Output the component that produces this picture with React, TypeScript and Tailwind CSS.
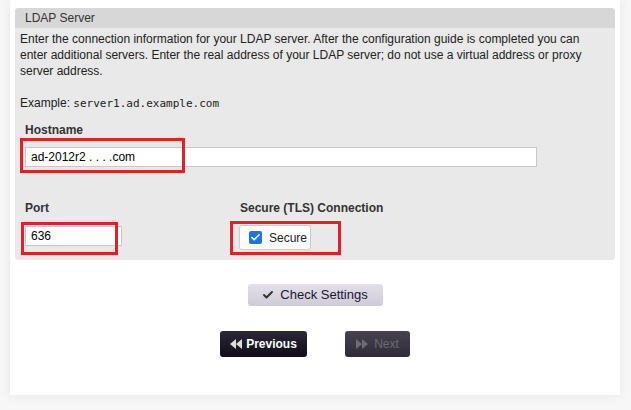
import { Check } from "lucide-react"

const App = () => {
	return (
		<div className="w-[631px] h-[410px] bg-[#f7f7f7] overflow-hidden font-['Liberation_Sans',Arial,sans-serif] text-[12px] text-[#222]">
			<div className="ml-[10px] w-[610px] h-[395px] bg-white shadow-[0_0_10px_rgba(0,0,0,0.08)] pt-[8px] px-[5px] relative">
				{/* Settings panel */}
				<div className="bg-[#e9e9e9] rounded-[4px] h-[252px] relative">
					<div className="bg-[#d7d7d7] h-[20px] rounded-t-[4px] px-[10px] leading-[20px] text-[12px] text-[#333]">
						LDAP Server
					</div>
					<div className="px-[5px] pt-[3px] leading-[16px] text-[#222]">
						<p>
							Enter the connection information for your LDAP server. After the configuration guide is completed you can enter additional servers. Enter the real address of your LDAP server; do not use a virtual address or proxy server address.
						</p>
						<p className="mt-[16px]">
							Example: <span className="font-['DejaVu_Sans_Mono',monospace] text-[11px]">server1.ad.example.com</span>
						</p>

						<div className="pl-[5px] mt-[10px]">
							<div className="font-bold text-[#333] leading-[16px]">Hostname</div>
							<input
								readOnly
								value="ad-2012r2 . . . .com"
								className="mt-[9px] w-[512px] h-[20px] bg-white border border-[#c8c8c8] px-[5px] text-[12px] text-black outline-none"
							/>
						</div>

						<div className="pl-[5px] mt-[33px] flex">
							<div className="w-[215px]">
								<div className="font-bold text-[#333] leading-[16px]">Port</div>
								<input
									readOnly
									value="636"
									className="mt-[10px] w-[97px] h-[20px] bg-white border border-[#c8c8c8] px-[5px] text-[12px] text-black outline-none"
								/>
							</div>
							<div>
								<div className="font-bold text-[#333] leading-[16px]">Secure (TLS) Connection</div>
								<div className="mt-[9px] -ml-[1px] w-[72px] h-[25px] bg-white border border-[#ccc] rounded-[3px] flex items-center pl-[9px] gap-[7px] text-[12px]">
									<span className="w-[13px] h-[13px] bg-[#1a73e8] rounded-[2px] flex items-center justify-center">
										<Check size={11} strokeWidth={3.5} color="white" />
									</span>
									<span>Secure</span>
								</div>
							</div>
						</div>
					</div>
				</div>

				{/* Buttons */}
				<div className="flex justify-center mt-[24px]">
					<div className="w-[135px] h-[22px] rounded-[3px] bg-gradient-to-b from-[#e2dfea] to-[#cfcbd8] flex items-center justify-center gap-[6px] text-[13px] text-[#1a1530]">
						<Check size={12} strokeWidth={4} color="#333" />
						<span>Check Settings</span>
					</div>
				</div>
				<div className="flex mt-[25px] pl-[205px] gap-[38px]">
					<div className="w-[87px] h-[26px] rounded-[3px] bg-gradient-to-b from-[#2c2838] to-[#100d18] flex items-center justify-center gap-[4px] text-white font-bold text-[12px]">
						<svg width="12" height="10" viewBox="0 0 12 10"><path d="M6 0 L0 5 L6 10 Z M12 0 L6 5 L12 10 Z" fill="#ddd" /></svg>
						<span>Previous</span>
					</div>
					<div className="w-[65px] h-[26px] rounded-[3px] bg-gradient-to-b from-[#46424f] to-[#2f2c38] flex items-center justify-center gap-[6px] text-[#6e6b75] text-[12px]">
						<svg width="12" height="10" viewBox="0 0 12 10"><path d="M0 0 L6 5 L0 10 Z M6 0 L12 5 L6 10 Z" fill="#6e6b75" /></svg>
						<span>Next</span>
					</div>
				</div>

				{/* Red annotation boxes */}
				<div className="absolute left-[10px] top-[138px] w-[165px] h-[35px] border-[3px] border-[#e0202a]" />
				<div className="absolute left-[11px] top-[222px] w-[97px] h-[33px] border-[3px] border-[#e0202a]" />
				<div className="absolute left-[220px] top-[221px] w-[111px] h-[34px] border-[3px] border-[#e0202a]" />
			</div>
		</div>
	)
}

export default App
